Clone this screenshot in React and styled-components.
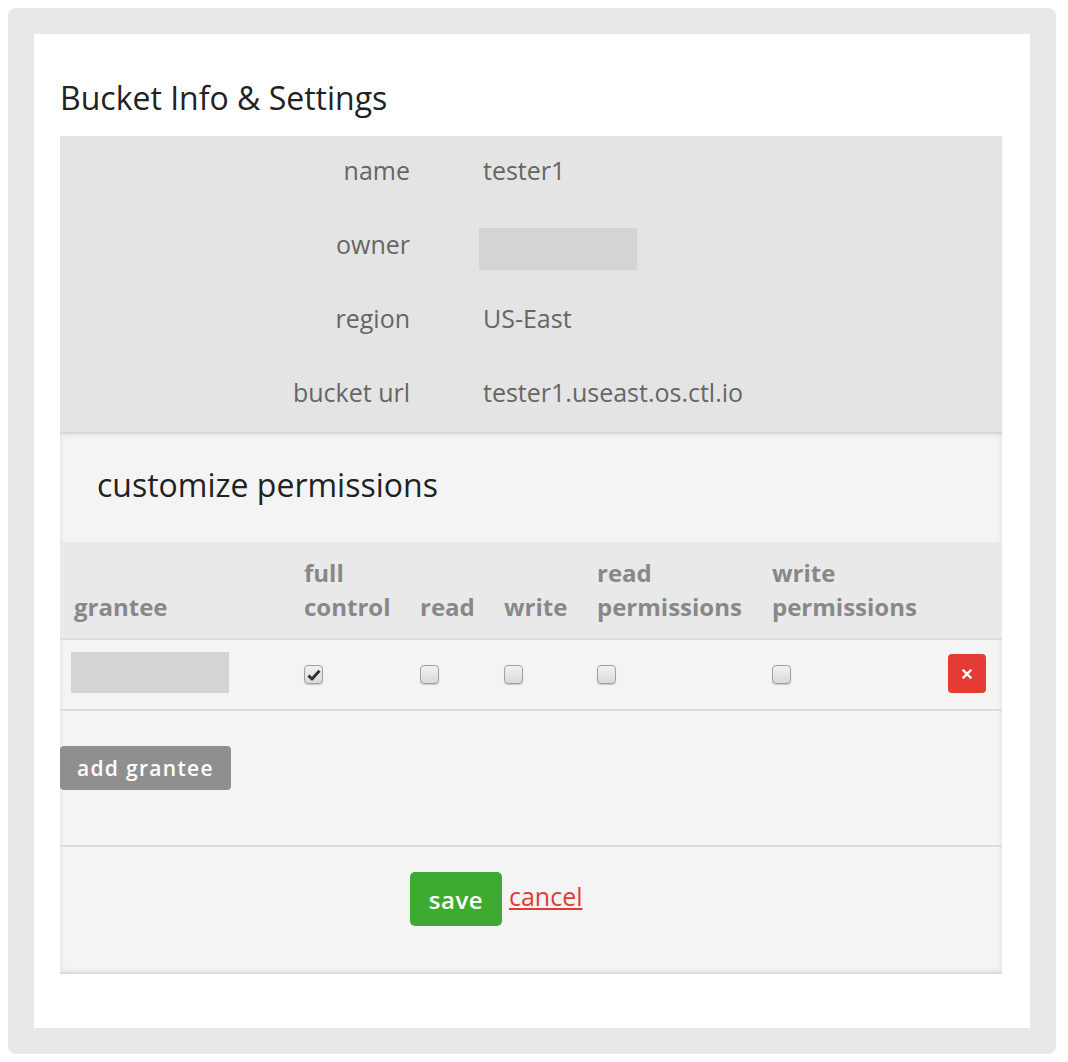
import React from "react"
import styled, { createGlobalStyle } from "styled-components"

const GlobalStyle = createGlobalStyle`
  body {
    margin: 0;
    background: #ffffff;
    font-family: "Open Sans", "Liberation Sans", sans-serif;
  }
`

const Frame = styled.div`
  margin: 8px 12px 8px 8px;
  padding: 26px;
  background: #e8e8e8;
  border-radius: 8px;
`

const Panel = styled.div`
  background: #ffffff;
  padding: 0 28px 54px 26px;
`

const Title = styled.h2`
  margin: 0;
  padding: 44px 0 18px;
  font-size: 32px;
  line-height: 40px;
  font-weight: 400;
  color: #222;
`

const InfoBox = styled.div`
  background: #e4e4e4;
  border-bottom: 2px solid #d6d6d6;
  padding: 2px 0 8px;
  display: flex;
  flex-direction: column;
  gap: 10px;
`

const InfoRow = styled.div`
  display: grid;
  grid-template-columns: 350px 1fr;
  column-gap: 69px;
  align-items: center;
  height: 64px;
  font-size: 25px;
  color: #666;
`

const InfoLabel = styled.div`
  text-align: right;
`

const InfoValue = styled.div`
  padding-left: 4px;
`

const Redacted = styled.div`
  width: ${(p) => p.w}px;
  height: ${(p) => p.h}px;
  background: #d4d3d5;
  margin-top: ${(p) => p.offset || 0}px;
`

const Perms = styled.div`
  background: #f4f4f4;
  box-shadow: inset 0 0 6px rgba(0, 0, 0, 0.09);
  border-bottom: 2px solid #dadada;
`

const PermsTitle = styled.h3`
  margin: 0;
  padding: 31px 37px 37px;
  font-size: 32px;
  line-height: 40px;
  font-weight: 400;
  color: #222;
`

const cols = "230px 116px 84px 93px 175px 1fr 68px"

const HeadRow = styled.div`
  display: grid;
  grid-template-columns: ${cols};
  align-items: end;
  background: #e9e9e9;
  border-bottom: 2px solid #dcdcdc;
  padding: 14px 0;
`

const HeadCell = styled.div`
  padding-left: 14px;
  font-size: 24px;
  line-height: 34px;
  font-weight: 700;
  color: #888;
  white-space: nowrap;
`

const BodyRow = styled.div`
  display: grid;
  grid-template-columns: ${cols};
  align-items: center;
  height: 69px;
  border-bottom: 2px solid #dcdcdc;
`

const Cell = styled.div`
  padding-left: ${(p) => (p.pad != null ? p.pad : 14)}px;
  display: flex;
  align-items: center;
`

const Check = styled.span`
  display: inline-flex;
  align-items: center;
  justify-content: center;
  box-sizing: border-box;
  width: 19px;
  height: 19px;
  border: 1px solid #a0a0a0;
  border-radius: 4px;
  background: linear-gradient(#f2f2f2, #d9d9d9);
  box-shadow: 0 1px 1px rgba(0, 0, 0, 0.18);
`

const DeleteButton = styled.button`
  width: 38px;
  height: 39px;
  border: none;
  border-radius: 4px;
  background: #e53b36;
  color: #fff;
  display: flex;
  align-items: center;
  justify-content: center;
  padding: 0;
  margin-top: -2px;
`

const AddArea = styled.div`
  padding: 35px 0 55px;
  border-bottom: 2px solid #dcdcdc;
`

const GreyButton = styled.button`
  height: 44px;
  padding: 0 17px;
  border: none;
  border-radius: 4px;
  background: #8f8f8f;
  color: #fff;
  font-family: "Open Sans", "Liberation Sans", sans-serif;
  font-size: 21px;
  font-weight: 600;
  letter-spacing: 1.3px;
`

const Footer = styled.div`
  display: flex;
  align-items: center;
  gap: 7px;
  padding: 25px 0 46px 350px;
`

const SaveButton = styled.button`
  width: 92px;
  height: 54px;
  border: none;
  border-radius: 5px;
  background: #3dab32;
  color: #fff;
  font-family: "Open Sans", "Liberation Sans", sans-serif;
  font-size: 24px;
  font-weight: 600;
  letter-spacing: 0.5px;
`

const CancelLink = styled.a`
  color: #e53935;
  font-size: 25px;
  text-decoration: underline;
  margin-top: -6px;
`

const info = [
  ["name", "tester1"],
  ["owner", null],
  ["region", "US-East"],
  ["bucket url", "tester1.useast.os.ctl.io"],
]

const heads = ["grantee", "full\ncontrol", "read", "write", "read\npermissions", "write\npermissions", ""]

const Tick = () => (
  <svg width="14" height="12" viewBox="0 0 14 12">
    <path d="M1.5 6.5 L5 10 L12.5 1.8" fill="none" stroke="#333" strokeWidth="3" strokeLinejoin="round" />
  </svg>
)

const Cross = () => (
  <svg width="10" height="10" viewBox="0 0 10 10">
    <path d="M1.5 1.5 L8.5 8.5 M8.5 1.5 L1.5 8.5" stroke="#fff" strokeWidth="2.4" strokeLinecap="square" />
  </svg>
)

export default function App() {
  const checks = [true, false, false, false, false]
  return (
    <>
      <GlobalStyle />
      <Frame>
        <Panel>
          <Title>Bucket Info &amp; Settings</Title>
          <InfoBox>
            {info.map(([label, value]) => (
              <InfoRow key={label}>
                <InfoLabel>{label}</InfoLabel>
                {value ? (
                  <InfoValue>{value}</InfoValue>
                ) : (
                  <Redacted w={158} h={42} offset={10} />
                )}
              </InfoRow>
            ))}
          </InfoBox>
          <Perms>
            <PermsTitle>customize permissions</PermsTitle>
            <HeadRow>
              {heads.map((h, i) => (
                <HeadCell key={i}>
                  {h.split("\n").map((line) => (
                    <div key={line}>{line}</div>
                  ))}
                </HeadCell>
              ))}
            </HeadRow>
            <BodyRow>
              <Cell pad={11}>
                <Redacted w={158} h={41} offset={-5} />
              </Cell>
              {checks.map((c, i) => (
                <Cell key={i}>
                  <Check>{c && <Tick />}</Check>
                </Cell>
              ))}
              <Cell>
                <DeleteButton>
                  <Cross />
                </DeleteButton>
              </Cell>
            </BodyRow>
            <AddArea>
              <GreyButton>add grantee</GreyButton>
            </AddArea>
            <Footer>
              <SaveButton>save</SaveButton>
              <CancelLink href="#cancel">cancel</CancelLink>
            </Footer>
          </Perms>
        </Panel>
      </Frame>
    </>
  )
}
